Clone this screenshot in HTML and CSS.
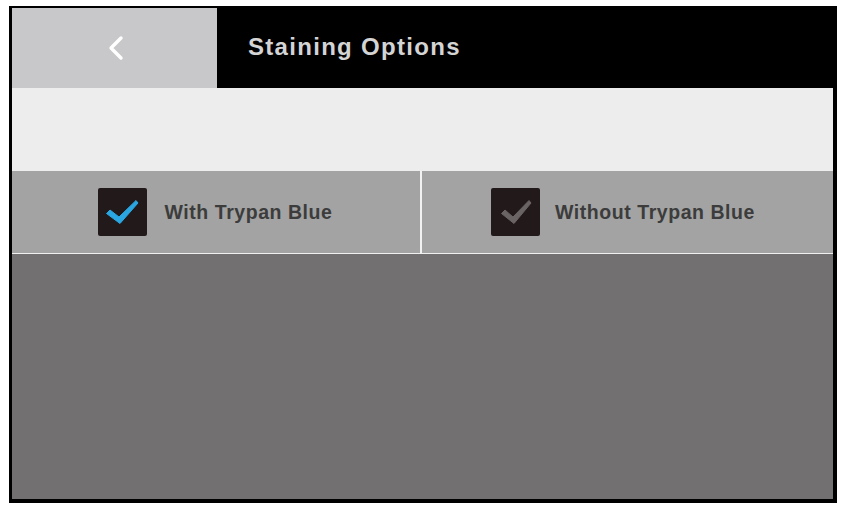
FILE: index.html
```html
<!DOCTYPE html>
<html>
<head>
<meta charset="utf-8">
<link rel="stylesheet" href="styles.css">
</head>
<body>
<div class="device">
  <div class="header">
    <div class="back">
      <svg width="20" height="28" viewBox="0 0 20 28"><path d="M15 4 L5 14 L15 24" fill="none" stroke="#ffffff" stroke-width="3.4" stroke-linecap="round" stroke-linejoin="round"/></svg>
    </div>
    <div class="title">Staining Options</div>
  </div>
  <div class="band"></div>
  <div class="options">
    <div class="option option-left">
      <div class="box">
        <svg width="49" height="48" viewBox="0 0 49 48"><path d="M8.5 25.5 L12 22 L21 29 L38 12.5 L40 15 L22 35.5 Z" fill="#2aa6e2" stroke="#2aa6e2" stroke-width="1" stroke-linejoin="round"/></svg>
      </div>
      <span class="label">With Trypan Blue</span>
    </div>
    <div class="option option-right">
      <div class="box">
        <svg width="49" height="48" viewBox="0 0 49 48"><path d="M10.5 25.5 L14 22 L22 29 L38 12.5 L40 15 L23 35.5 Z" fill="#6b6464" stroke="#6b6464" stroke-width="1" stroke-linejoin="round"/></svg>
      </div>
      <span class="label">Without Trypan Blue</span>
    </div>
  </div>
  <div class="content"></div>
</div>
</body>
</html>
```
FILE: styles.css
```css
html, body {
  margin: 0;
  padding: 0;
  background: #ffffff;
}
body {
  font-family: "Liberation Sans", Arial, sans-serif;
}
.device {
  margin: 6px 0 0 9px;
  width: 821px;
  height: 491px;
  border-style: solid;
  border-color: #000000;
  border-width: 2px 4px 4px 3px;
  display: flex;
  flex-direction: column;
  background: #727070;
}
.header {
  height: 80px;
  display: flex;
  background: #000000;
}
.back {
  width: 205px;
  background: #c8c8ca;
  display: flex;
  align-items: center;
  justify-content: center;
  padding-left: 2px;
  box-sizing: border-box;
}
.title {
  display: flex;
  align-items: center;
  padding-left: 31px;
  padding-bottom: 2px;
  color: #d4d4d4;
  font-weight: bold;
  font-size: 24px;
  letter-spacing: 1.3px;
}
.band {
  height: 83px;
  background: #ededed;
}
.options {
  height: 82px;
  display: flex;
  background: #a3a3a3;
  border-bottom: 1px solid #f0f0f0;
}
.option {
  display: flex;
  align-items: center;
  justify-content: center;
  box-sizing: border-box;
}
.option-left {
  width: 410px;
  gap: 18px;
  padding-right: 2px;
  border-right: 2px solid #f2f2f2;
}
.option-right {
  flex: 1;
  gap: 15px;
  padding-right: 9px;
}
.box {
  width: 49px;
  height: 48px;
  background: #221a1a;
  border-radius: 2px;
  display: flex;
}
.label {
  color: #3c3c3c;
  font-weight: bold;
  font-size: 19.5px;
  letter-spacing: 0.55px;
}
.content {
  flex: 1;
  background: #727070;
}
```
